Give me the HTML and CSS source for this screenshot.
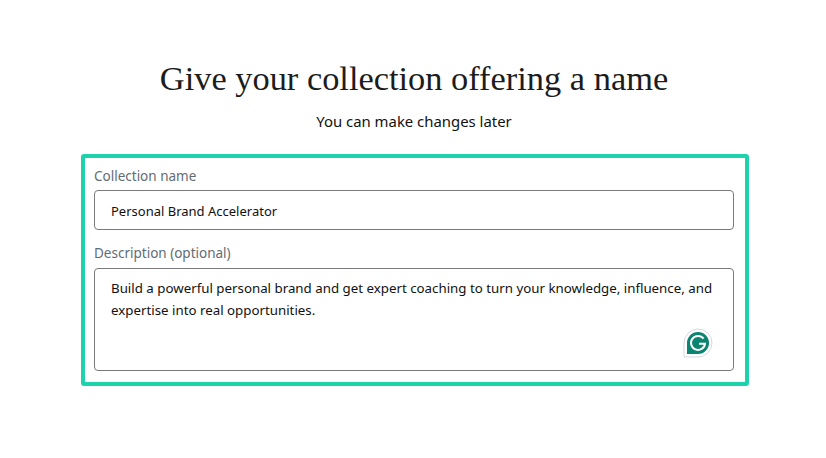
FILE: index.html
```html
<!DOCTYPE html>
<html lang="en">
<head>
    <meta charset="UTF-8">
    <title>Give your collection offering a name</title>
    <link rel="stylesheet" href="styles.css">
</head>
<body>
    <header class="intro">
        <h1>Give your collection offering a name</h1>
        <p>You can make changes later</p>
    </header>

    <form class="offer-form">
        <div class="field">
            <label class="field-label">Collection name</label>
            <div class="field-box field-input">Personal Brand Accelerator</div>
        </div>
        <div class="field">
            <label class="field-label field-label-tall">Description (optional)</label>
            <div class="field-box field-textarea">
                Build a powerful personal brand and get expert coaching to turn your knowledge, influence, and expertise into real opportunities.
                <svg class="grammarly" width="30" height="30" viewBox="0 0 30 30" aria-hidden="true">
                    <path d="M1 29V15a14 14 0 1 1 14 14z" fill="#fff" stroke="#d5d9e6" stroke-width="1"/>
                    <path d="M4 26V15a11 11 0 1 1 11 11z" fill="#0b8470"/>
                    <path d="M20.6 10.6a7 7 0 1 0 1.4 5.2h-6" fill="none" stroke="#fff" stroke-width="2"/>
                </svg>
            </div>
        </div>
    </form>
</body>
</html>
```

FILE: styles.css
```css
body {
    margin: 0;
    padding: 0;
    background: #ffffff;
    color: #111111;
    font-family: "Noto Sans", Arial, sans-serif;
}

.intro {
    padding: 58px 0 0 2px;
    text-align: center;
}

.intro h1 {
    margin: 0;
    font-family: "Liberation Serif", serif;
    font-weight: 400;
    font-size: 34.4px;
    line-height: 40px;
    color: #1c1c1c;
}

.intro p {
    margin: 13px 0 0;
    font-size: 14.9px;
    line-height: 20px;
}

.offer-form {
    box-sizing: border-box;
    width: 668px;
    margin: 23px 0 0 81px;
    padding: 9px 11px 11px 9px;
    border: 4px solid #1ed3ac;
    border-radius: 3px;
    display: flex;
    flex-direction: column;
    gap: 14px;
}

.field-label {
    display: block;
    height: 23px;
    font-size: 13.5px;
    line-height: 18px;
    color: #616d76;
}

.field-label-tall {
    height: 24px;
}

.field-box {
    box-sizing: border-box;
    border: 1px solid #7a7a7a;
    border-radius: 4px;
    font-size: 13px;
    color: #111111;
}

.field-input {
    height: 40px;
    padding: 0 16px;
    line-height: 40px;
}

.field-textarea {
    position: relative;
    height: 103px;
    padding: 8px 16px;
    font-size: 13.3px;
    line-height: 22px;
}

.grammarly {
    position: absolute;
    right: 20px;
    bottom: 12px;
}
```
